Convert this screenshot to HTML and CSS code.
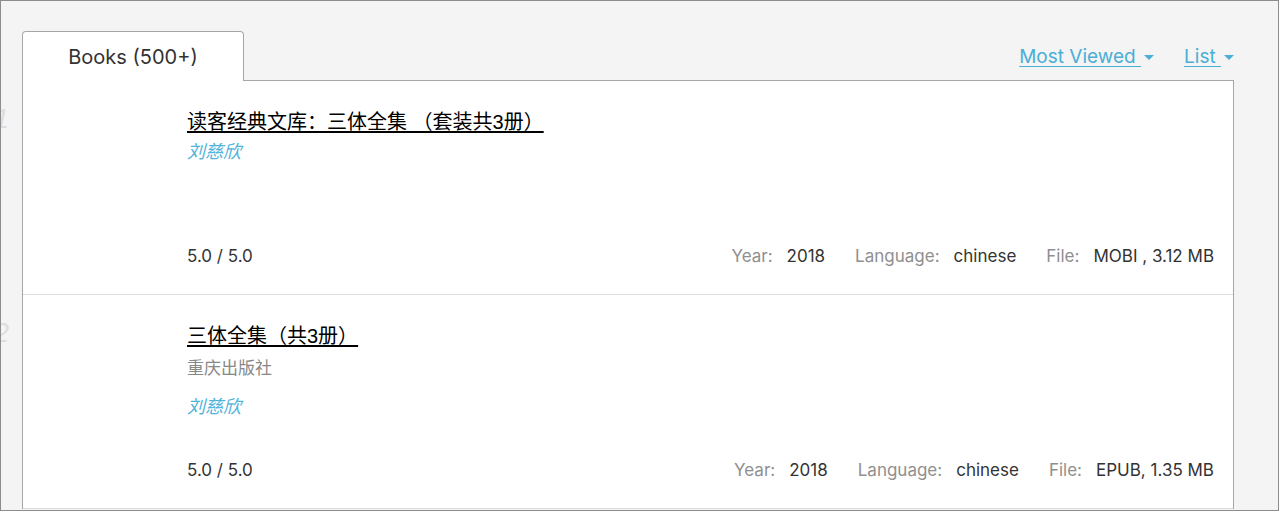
FILE: index.html
```html
<!DOCTYPE html>
<html lang="zh">
<head>
<meta charset="utf-8">
<title>Books</title>
<link rel="stylesheet" href="styles.css">
</head>
<body>
<div class="wrap">
  <div class="tabs-row">
    <div class="tab">Books (500+)</div>
    <div class="views">
      <a class="drop" href="#"><span class="drop-text">Most Viewed </span><span class="caret"></span></a>
      <a class="drop" href="#"><span class="drop-text">List </span><span class="caret"></span></a>
    </div>
  </div>
  <div class="card">
    <div class="book">
      <span class="num">1</span>
      <div class="cover"></div>
      <div class="info">
        <a class="title" href="#">读客经典文库：三体全集 （套装共3册）</a>
        <a class="author" href="#">刘慈欣</a>
        <div class="bottom">
          <div class="rating">5.0 / 5.0</div>
          <div class="meta">
            <span class="label">Year:</span><span class="value">2018</span>
            <span class="label">Language:</span><span class="value">chinese</span>
            <span class="label">File:</span><span class="value">MOBI , 3.12 MB</span>
          </div>
        </div>
      </div>
    </div>
    <div class="book">
      <span class="num">2</span>
      <div class="cover"></div>
      <div class="info">
        <a class="title" href="#">三体全集（共3册）</a>
        <div class="publisher">重庆出版社</div>
        <a class="author author-gap" href="#">刘慈欣</a>
        <div class="bottom">
          <div class="rating">5.0 / 5.0</div>
          <div class="meta">
            <span class="label">Year:</span><span class="value">2018</span>
            <span class="label">Language:</span><span class="value">chinese</span>
            <span class="label">File:</span><span class="value">EPUB, 1.35 MB</span>
          </div>
        </div>
      </div>
    </div>
  </div>
</div>
</body>
</html>
```
FILE: styles.css
```css
html, body {
  margin: 0;
  padding: 0;
}
body {
  width: 1279px;
  height: 511px;
  box-sizing: border-box;
  border: 1px solid #8c8c8c;
  background: #f4f4f4;
  overflow: hidden;
  font-family: "Inter", "Noto Sans CJK SC", sans-serif;
  color: #333;
}
.wrap {
  padding: 30px 44px 0 21px;
}
.tabs-row {
  display: flex;
  justify-content: space-between;
  align-items: center;
}
.tab {
  width: 220px;
  height: 49px;
  box-sizing: content-box;
  border: 1px solid #a6a6a6;
  border-bottom: none;
  border-radius: 4px 4px 0 0;
  background: #fff;
  display: flex;
  align-items: center;
  justify-content: center;
  font-size: 20px;
  color: #333;
  margin-bottom: -1px;
  position: relative;
  z-index: 1;
  padding-top: 0;
}
.views {
  display: flex;
  align-items: center;
  gap: 30px;
  padding-top: 2px;
}
.drop {
  display: flex;
  align-items: center;
  color: #4aaed6;
  text-decoration: none;
  font-size: 19px;
}
.drop-text {
  text-decoration: underline;
  text-decoration-thickness: 1px;
  text-underline-offset: 3px;
  white-space: pre;
}
.caret {
  display: inline-block;
  width: 0;
  height: 0;
  border-left: 5px solid transparent;
  border-right: 5px solid transparent;
  border-top: 5px solid #4aaed6;
  margin-left: 3px;
  margin-top: 2px;
}
.card {
  background: #fff;
  border: 1px solid #a6a6a6;
  border-bottom: none;
}
.book {
  position: relative;
  display: flex;
  min-height: 213px;
  border-bottom: 1px solid #dcdcdc;
}
.num {
  position: absolute;
  right: calc(100% + 14px);
  top: 22px;
  font-size: 28px;
  font-style: italic;
  color: #dedede;
  font-family: "Liberation Sans", sans-serif;
}
.cover {
  width: 164px;
  flex: none;
}
.info {
  flex: 1;
  display: flex;
  flex-direction: column;
  align-items: flex-start;
  padding: 29px 19px 27px 0;
}
.title {
  font-family: "Liberation Sans", "Noto Sans CJK SC", sans-serif;
  font-size: 20px;
  line-height: 24px;
  color: #000;
  text-decoration: underline;
  text-decoration-thickness: 2px;
  text-underline-offset: 2px;
}
.author {
  margin-top: 7px;
  font-size: 18px;
  line-height: 22px;
  font-style: italic;
  color: #4fb3da;
  text-decoration: none;
}
.author-gap {
  margin-top: 17px;
}
.publisher {
  margin-top: 9px;
  font-size: 17px;
  line-height: 22px;
  color: #888;
}
.bottom {
  margin-top: auto;
  align-self: stretch;
  display: flex;
  justify-content: space-between;
  align-items: center;
  font-size: 17px;
  line-height: 22px;
}
.rating {
  color: #333;
}
.meta {
  display: flex;
  align-items: center;
}
.label {
  color: #8f8f8f;
  margin-right: 14px;
  margin-left: 30px;
}
.label:first-child {
  margin-left: 0;
}
.value {
  color: #333;
}
```
